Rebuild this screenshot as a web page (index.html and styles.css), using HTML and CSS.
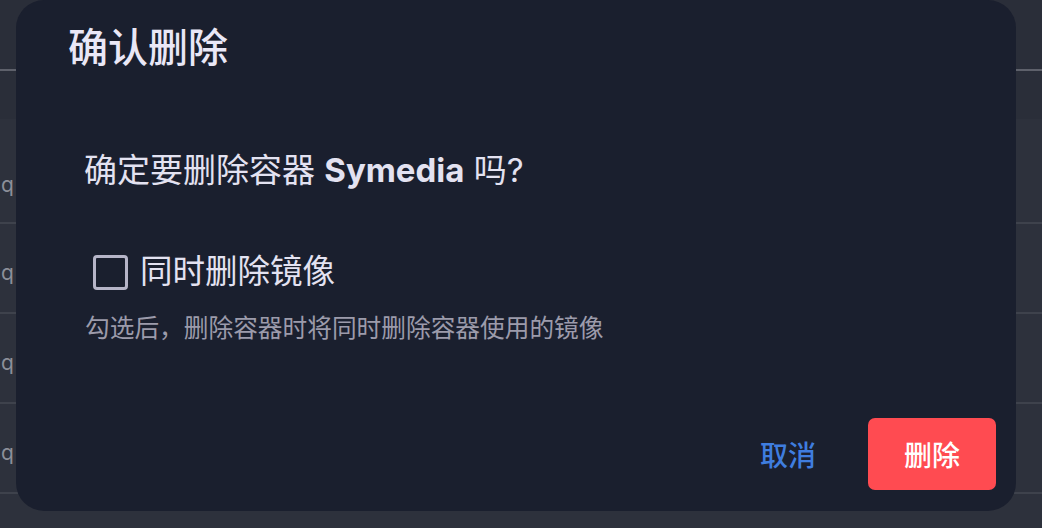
FILE: index.html
```html
<!DOCTYPE html>
<html lang="zh-CN">
<head>
<meta charset="utf-8">
<link rel="stylesheet" href="styles.css">
</head>
<body>
<div class="page">
  <div class="topbar"></div>
  <div class="subbar"></div>
  <div class="table">
    <div class="row first"><span class="cell">q</span></div>
    <div class="row"><span class="cell">q</span></div>
    <div class="row"><span class="cell">q</span></div>
    <div class="row"><span class="cell">q</span></div>
    <div class="row last">
      <span class="tag green"></span>
      <span class="tag blue"></span>
    </div>
  </div>
</div>

<div class="dialog">
  <h2 class="title">确认删除</h2>
  <p class="message">确定要删除容器 <b>Symedia</b> 吗?</p>
  <label class="check">
    <span class="box"></span>
    <span class="check-label">同时删除镜像</span>
  </label>
  <p class="hint">勾选后，删除容器时将同时删除容器使用的镜像</p>
  <div class="actions">
    <button class="btn cancel">取消</button>
    <button class="btn danger">删除</button>
  </div>
</div>
</body>
</html>
```

FILE: styles.css
```css
* { box-sizing: border-box; }
html, body {
  margin: 0;
  padding: 0;
  width: 1042px;
  height: 528px;
  overflow: hidden;
  background: #2b2f3a;
  font-family: Inter, "Noto Sans CJK SC", sans-serif;
}
.page {
  width: 1042px;
  height: 528px;
  display: flex;
  flex-direction: column;
}
.topbar {
  height: 71px;
  flex: none;
  border-bottom: 2px solid #5e616b;
  background: #2a2e39;
}
.subbar {
  height: 48px;
  flex: none;
  background: #2a2e39;
}
.table {
  display: flex;
  flex-direction: column;
  background: #2d313c;
}
.row {
  height: 90px;
  flex: none;
  border-bottom: 2px solid #3e424c;
  display: flex;
  align-items: center;
  position: relative;
}
.row.first { height: 105px; }
.row.last { border-bottom: none; height: 60px; }
.cell {
  font-size: 21px;
  color: #8c8f99;
  margin-left: 1px;
  margin-top: 9px;
}
.row.first .cell { margin-top: 27px; }
.tag {
  position: absolute;
  top: 35px;
  width: 20px;
  height: 12px;
  border-radius: 3px 3px 0 0;
}
.tag.green { left: 606px; background: #4caf2e; }
.tag.blue { left: 742px; background: #3a8fd0; }

.dialog {
  position: absolute;
  left: 16px;
  top: 0;
  width: 1000px;
  height: 511px;
  background: #1a1f2e;
  border-radius: 28px;
  display: flex;
  flex-direction: column;
  padding: 20px 20px 21px 52px;
}
.title {
  margin: 0;
  font-size: 40px;
  line-height: 56px;
  font-weight: 500;
  color: #e9e7f6;
}
.message {
  margin: 70px 0 0 16px;
  font-size: 33px;
  line-height: 48px;
  color: #e3e2f1;
}
.message b { font-weight: 700; }
.check {
  margin: 54px 0 0 25px;
  height: 48px;
  display: flex;
  align-items: center;
  gap: 12px;
}
.box {
  width: 35px;
  height: 35px;
  border: 3px solid #b6b5c8;
  border-radius: 4px;
  flex: none;
}
.check-label {
  font-size: 32.5px;
  line-height: 48px;
  color: #e3e2f1;
}
.hint {
  margin: 14px 0 0 17px;
  font-size: 24.7px;
  line-height: 36px;
  color: #9c9bab;
}
.actions {
  margin-top: auto;
  display: flex;
  justify-content: flex-end;
  gap: 16px;
}
.btn {
  height: 72px;
  width: 128px;
  border: none;
  border-radius: 7px;
  font-family: Inter, "Noto Sans CJK SC", sans-serif;
  font-size: 28px;
  font-weight: 500;
  cursor: pointer;
}
.cancel {
  background: transparent;
  color: #3f7ddf;
}
.danger {
  background: #ff4b51;
  color: #ffffff;
}
```
